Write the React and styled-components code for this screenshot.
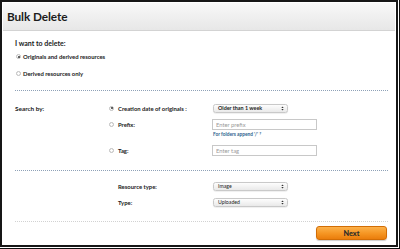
import React, { useState } from 'react';
import styled, { createGlobalStyle } from 'styled-components';

const Global = createGlobalStyle`
  html, body {
    margin: 0;
    padding: 0;
    background: #fff;
  }
  * {
    box-sizing: border-box;
  }
`;

const Outer = styled.div`
  width: 400px;
  height: 249px;
  padding: 0 1px 1px 0;
  border-right: 1px solid #111;
  border-bottom: 1px solid #111;
  background: #fff;
`;

const Frame = styled.div`
  width: 100%;
  height: 100%;
  border: 2px solid #161616;
  display: flex;
  flex-direction: column;
  font-family: Lato, 'Open Sans', sans-serif;
  color: #222;
`;

const Header = styled.header`
  margin: 1px 1px 0 1px;
  height: 28px;
  display: flex;
  align-items: center;
  padding: 0 0 1px 4px;
  background: linear-gradient(#f8f8f8, #e7e7e7);
  border-bottom: 1px solid #d3d3d3;
  h1 {
    margin: 0;
    font-size: 11.8px;
    font-weight: 700;
    color: #1c1c1c;
    letter-spacing: -0.1px;
  }
`;

const Content = styled.div`
  padding: 0 8px 0 13px;
  display: flex;
  flex-direction: column;
`;

const Heading = styled.div`
  margin-top: 8px;
  height: 9px;
  line-height: 9px;
  font-size: 7px;
  font-weight: 700;
`;

const OptionRow = styled.label`
  height: 17px;
  display: flex;
  align-items: center;
  gap: 2px;
  padding-left: 1px;
  font-size: 5.9px;
  font-weight: 700;
  cursor: pointer;
`;

const Radio = styled.span`
  width: 5px;
  height: 5px;
  border-radius: 50%;
  border: 0.6px solid #bdbdbd;
  background: radial-gradient(circle, #fff 40%, #e9e9e9);
  display: inline-flex;
  align-items: center;
  justify-content: center;
  flex: none;
  &::after {
    content: '';
    width: 2px;
    height: 2px;
    border-radius: 50%;
    background: ${p => (p.$checked ? '#333' : 'transparent')};
  }
`;

const Separator = styled.div`
  height: 0;
  margin-top: ${p => p.$top}px;
  border-top: 1px dotted ${p => (p.$light ? '#d2d2d2' : '#8ea1b7')};
`;

const Grid = styled.div`
  display: grid;
  grid-template-columns: 93px 10px 94px 1fr;
  align-items: center;
  padding-top: ${p => p.$top}px;
  padding-bottom: ${p => p.$bottom}px;
  font-size: 5.8px;
  font-weight: 700;
`;

const Label = styled.div`
  grid-column: ${p => p.$col};
  height: ${p => p.$h}px;
  margin-top: ${p => p.$mt || 0}px;
  display: flex;
  align-items: center;
  font-size: ${p => p.$size || 5.9}px;
`;

const RadioCell = styled.div`
  grid-column: 2;
  height: ${p => p.$h}px;
  margin-top: ${p => p.$mt || 0}px;
  display: flex;
  align-items: center;
  padding-left: 1px;
`;

const Control = styled.div`
  grid-column: 4;
  height: ${p => p.$h}px;
  margin-top: ${p => p.$mt || 0}px;
  display: flex;
  align-items: center;
`;

const SelectBox = styled.div`
  width: 75px;
  height: 9px;
  margin-left: 1px;
  border: 0.6px solid #c9c9c9;
  border-radius: 2.5px;
  background: linear-gradient(#fdfdfd, #e9e9e9);
  box-shadow: 0 0.5px 1px rgba(0, 0, 0, 0.12);
  display: flex;
  align-items: center;
  justify-content: space-between;
  padding: 0 3px 0 4px;
  font-size: ${p => (p.$bold ? 5.4 : 5.2)}px;
  font-weight: ${p => (p.$bold ? 700 : 400)};
  color: #222;
`;

const TextInput = styled.input`
  width: 105px;
  height: 11px;
  border: 0.8px solid #c8c8c8;
  padding: 0 3px;
  font-family: Lato, sans-serif;
  font-size: 5.8px;
  color: #333;
  outline: none;
  &::placeholder {
    color: #9a9a9a;
  }
`;

const Hint = styled.a`
  grid-column: 4;
  height: 7px;
  display: flex;
  align-items: center;
  gap: 1px;
  padding-left: 1px;
  font-size: 4.8px;
  font-weight: 700;
  color: #2b5f8e;
  text-decoration: none;
`;

const HelpIcon = styled.span`
  font-size: 4.4px;
  line-height: 4px;
  color: #2b5f8e;
  font-weight: 700;
`;

const Footer = styled.div`
  display: flex;
  justify-content: flex-end;
  padding-top: 4px;
  padding-right: 1px;
`;

const NextButton = styled.button`
  width: 71px;
  height: 14px;
  border: 0.8px solid #d26d05;
  border-radius: 3px;
  background: linear-gradient(#fcb14a, #f59522 55%, #ea7d0c);
  box-shadow: 0 1px 1px rgba(0, 0, 0, 0.2);
  font-family: Lato, sans-serif;
  font-size: 7.2px;
  font-weight: 900;
  color: #2a2a2a;
  padding: 0;
  cursor: pointer;
`;

const Arrows = () => (
  <svg width="3" height="5" viewBox="0 0 3 5">
    <path d="M0.3 2 L1.5 0.6 L2.7 2 Z" fill="#333" />
    <path d="M0.3 3 L1.5 4.4 L2.7 3 Z" fill="#333" />
  </svg>
);

const Select = ({ value, bold }) => (
  <SelectBox $bold={bold}>
    <span>{value}</span>
    <Arrows />
  </SelectBox>
);

export default function App() {
  const [target, setTarget] = useState('originals');
  const [by, setBy] = useState('date');

  return (
    <Outer>
      <Global />
      <Frame>
        <Header>
          <h1>Bulk Delete</h1>
        </Header>
        <Content>
          <Heading>I want to delete:</Heading>
          <OptionRow onClick={() => setTarget('originals')}>
            <Radio $checked={target === 'originals'} />
            Originals and derived resources
          </OptionRow>
          <OptionRow onClick={() => setTarget('derived')}>
            <Radio $checked={target === 'derived'} />
            Derived resources only
          </OptionRow>
          <Separator $top={8} />

          <Grid $top={12} $bottom={14}>
            <Label $col={1} $h={10} $size={6.4}>Search by:</Label>
            <RadioCell $h={10} onClick={() => setBy('date')}>
              <Radio $checked={by === 'date'} />
            </RadioCell>
            <Label $col={3} $h={10}>Creation date of originals :</Label>
            <Control $h={10}>
              <Select value="Older than 1 week" bold />
            </Control>

            <RadioCell $h={11} $mt={6} onClick={() => setBy('prefix')}>
              <Radio $checked={by === 'prefix'} />
            </RadioCell>
            <Label $col={3} $h={11} $mt={6}>Prefix:</Label>
            <Control $h={11} $mt={6}>
              <TextInput placeholder="Enter prefix" />
            </Control>

            <Hint href="#">
              For folders append '/' <HelpIcon>?</HelpIcon>
            </Hint>

            <RadioCell $h={11} $mt={8} onClick={() => setBy('tag')}>
              <Radio $checked={by === 'tag'} />
            </RadioCell>
            <Label $col={3} $h={11} $mt={8}>Tag:</Label>
            <Control $h={11} $mt={8}>
              <TextInput placeholder="Enter tag" />
            </Control>
          </Grid>
          <Separator $top={0} />

          <Grid $top={10} $bottom={14}>
            <Label $col={3} $h={10}>Resource type:</Label>
            <Control $h={10}>
              <Select value="Image" />
            </Control>
            <Label $col={3} $h={10} $mt={6}>Type:</Label>
            <Control $h={10} $mt={6}>
              <Select value="Uploaded" />
            </Control>
          </Grid>
          <Separator $top={0} $light />

          <Footer>
            <NextButton>Next</NextButton>
          </Footer>
        </Content>
      </Frame>
    </Outer>
  );
}
